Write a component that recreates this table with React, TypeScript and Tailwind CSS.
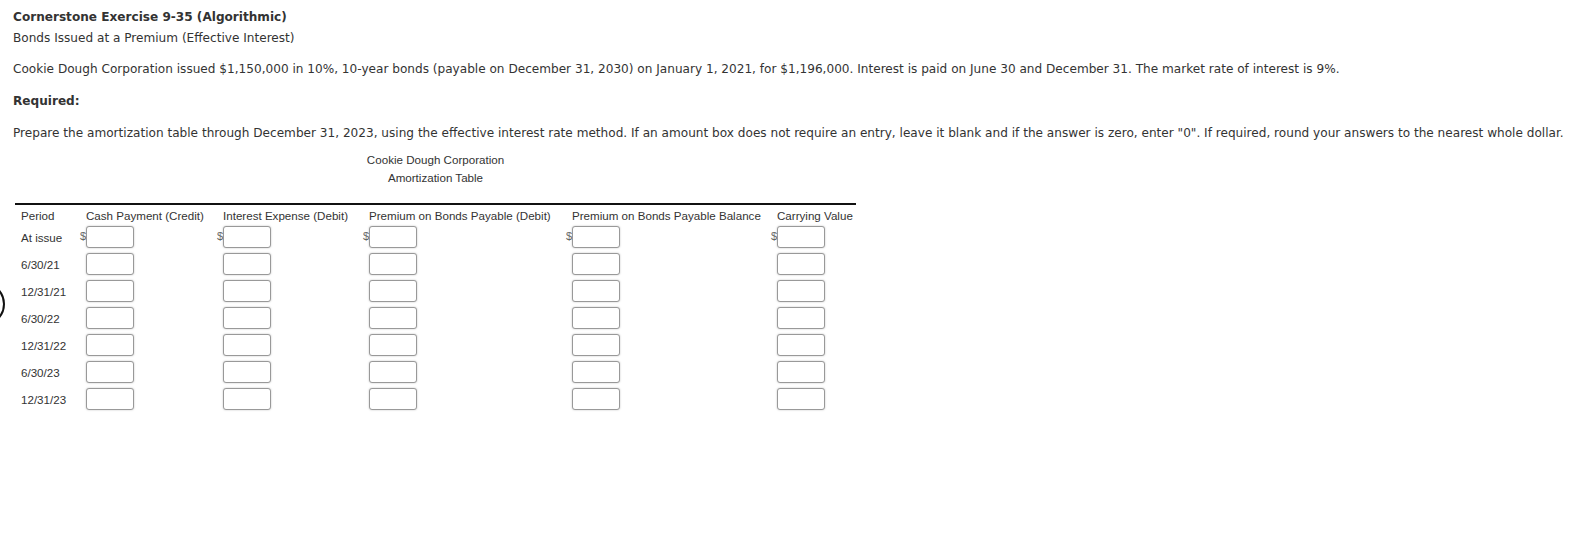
import React from "react";

const body = { fontFamily: '"DejaVu Sans", Verdana, sans-serif' };
const tab = { fontFamily: '"Liberation Sans", Arial, sans-serif' };

const periods = ["At issue", "6/30/21", "12/31/21", "6/30/22", "12/31/22", "6/30/23", "12/31/23"];
const headers = [
  "Cash Payment (Credit)",
  "Interest Expense (Debit)",
  "Premium on Bonds Payable (Debit)",
  "Premium on Bonds Payable Balance",
  "Carrying Value",
];

function Box({ dollar }: { dollar: boolean }) {
  return (
    <div className="flex items-center">
      <span className="w-[6px] text-[11px] leading-none text-[#666]">{dollar ? "$" : ""}</span>
      <input
        type="text"
        className="w-[48px] h-[22px] rounded-[3px] border border-[#999] bg-white shadow-[0_0_2px_rgba(0,0,0,0.25)] outline-none"
      />
    </div>
  );
}

export default function App() {
  return (
    <div className="relative min-h-[555px] w-[1595px] overflow-hidden bg-white text-[#333]">
      <div className="absolute left-[-39px] top-[282px] h-[44px] w-[44px] rounded-full border-2 border-[#111]" />
      <div className="pl-[13px] pt-[6px]" style={body}>
        <div className="text-[12.1px] font-bold leading-[22px]">Cornerstone Exercise 9-35 (Algorithmic)</div>
        <div className="text-[12.1px] leading-[21px]">Bonds Issued at a Premium (Effective Interest)</div>
        <p className="mt-[10px] text-[12.1px] leading-[20px]">
          Cookie Dough Corporation issued $1,150,000 in 10%, 10-year bonds (payable on December 31, 2030) on January 1, 2021, for $1,196,000. Interest is paid on June 30 and December 31. The market rate of interest is 9%.
        </p>
        <p className="mt-[12px] text-[12.1px] font-bold leading-[20px]">Required:</p>
        <p className="mt-[12px] text-[12.1px] leading-[20px] whitespace-nowrap">
          Prepare the amortization table through December 31, 2023, using the effective interest rate method. If an amount box does not require an entry, leave it blank and if the answer is zero, enter "0". If required, round your answers to the nearest whole dollar.
        </p>
      </div>
      <div className="ml-[15px] w-[841px] text-[11.6px] text-[#333]" style={tab}>
        <div className="mt-[8px] text-center leading-[18px]">
          <div>Cookie Dough Corporation</div>
          <div>Amortization Table</div>
        </div>
        <div className="mt-[16px] border-t-2 border-[#111]">
          <div className="grid grid-cols-[65px_137px_146px_203px_205px_85px] h-[18px] pt-[3px] leading-[16px] whitespace-nowrap">
            <div className="pl-[6px]">Period</div>
            {headers.map((h) => (
              <div key={h} className="pl-[6px]">{h}</div>
            ))}
          </div>
          {periods.map((p, i) => (
            <div key={p} className="grid grid-cols-[65px_137px_146px_203px_205px_85px] h-[27px] items-center">
              <div className="pl-[6px] pt-[2px]">{p}</div>
              {headers.map((h) => (
                <Box key={h} dollar={i === 0} />
              ))}
            </div>
          ))}
        </div>
      </div>
    </div>
  );
}
